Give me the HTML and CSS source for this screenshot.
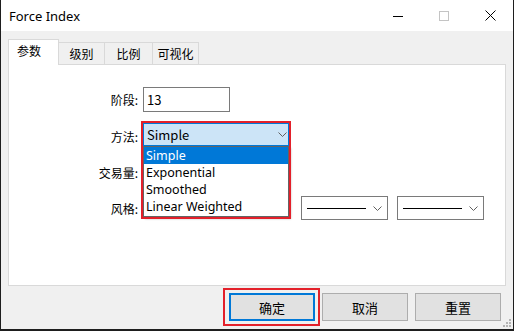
FILE: index.html
```html
<!DOCTYPE html>
<html lang="zh">
<head>
  <meta charset="UTF-8" />
  <title>Force Index</title>
  <link rel="stylesheet" href="styles.css">
</head>
<body>

  <div class="window">
    <!-- TITULO -->
    <div class="titlebar">
      <span class="title">Force Index</span>
      <div class="caption">
        <span class="cap-btn">
          <svg width="10" height="10" viewBox="0 0 10 10"><path d="M0 5.5h10" stroke="#000" stroke-width="1"/></svg>
        </span>
        <span class="cap-btn">
          <svg width="10" height="10" viewBox="0 0 10 10"><rect x="0.5" y="0.5" width="9" height="9" fill="none" stroke="#c4c4c4"/></svg>
        </span>
        <span class="cap-btn">
          <svg width="11" height="11" viewBox="0 0 11 11"><path d="M0.5 0.5l10 10M10.5 0.5l-10 10" stroke="#000" stroke-width="1"/></svg>
        </span>
      </div>
    </div>

    <!-- PESTAÑAS -->
    <div class="tabs">
      <div class="tab active">参数</div>
      <div class="tab">级别</div>
      <div class="tab wide">比例</div>
      <div class="tab">可视化</div>
    </div>

    <div class="panel">
      <div class="form">
        <label>阶段:</label>
        <div class="field"><div class="input">13</div></div>

        <label>方法:</label>
        <div class="field">
          <div class="combo-open">
            <div class="combo focus">
              <span>Simple</span>
              <svg class="chev" width="9" height="5" viewBox="0 0 9 5"><path d="M0.5 0.5l4 4 4-4" fill="none" stroke="#606060"/></svg>
            </div>
            <div class="dropdown">
              <div class="item selected">Simple</div>
              <div class="item">Exponential</div>
              <div class="item">Smoothed</div>
              <div class="item">Linear Weighted</div>
            </div>
            <div class="mark"></div>
          </div>
        </div>

        <label>交易量:</label>
        <div class="field"></div>

        <label>风格:</label>
        <div class="field row">
          <div class="spacer"></div>
          <div class="combo line">
            <span class="stroke"></span>
            <svg class="chev" width="9" height="5" viewBox="0 0 9 5"><path d="M0.5 0.5l4 4 4-4" fill="none" stroke="#606060"/></svg>
          </div>
          <div class="combo line">
            <span class="stroke"></span>
            <svg class="chev" width="9" height="5" viewBox="0 0 9 5"><path d="M0.5 0.5l4 4 4-4" fill="none" stroke="#606060"/></svg>
          </div>
        </div>
      </div>
    </div>

    <!-- BOTONES -->
    <div class="footer">
      <div class="btn-wrap">
        <button class="default">确定</button>
        <div class="mark"></div>
      </div>
      <button>取消</button>
      <button>重置</button>
    </div>

    <svg class="grip" width="8" height="8" viewBox="0 0 8 8" fill="#b4b4b4">
      <rect x="6" y="0" width="2" height="2"/>
      <rect x="3" y="3" width="2" height="2"/><rect x="6" y="3" width="2" height="2"/>
      <rect x="0" y="6" width="2" height="2"/><rect x="3" y="6" width="2" height="2"/><rect x="6" y="6" width="2" height="2"/>
    </svg>
  </div>

</body>
</html>
```

FILE: styles.css
```css
body {
  margin: 0;
  background: #1e1e1e;
  font-family: 'Noto Sans CJK SC', 'Noto Sans', sans-serif;
  font-size: 12px;
  color: #000;
}
.window {
  position: relative;
  width: 512px;
  height: 329px;
  margin-left: 1px;
  background: #f0f0f0;
  display: flex;
  flex-direction: column;
}
.titlebar {
  height: 31px;
  background: #fff;
  display: flex;
  align-items: center;
  flex-shrink: 0;
}
.title {
  padding-left: 8px;
  font-family: 'Noto Sans', sans-serif;
  font-size: 13px;
  flex: 1;
}
.caption {
  display: flex;
  height: 31px;
}
.cap-btn {
  width: 46px;
  display: flex;
  align-items: center;
  justify-content: center;
}
.tabs {
  display: flex;
  align-items: flex-end;
  margin: 9px 0 0 7px;
  height: 24px;
  position: relative;
  z-index: 1;
}
.tab {
  width: 45px;
  height: 21px;
  border: 1px solid #d9d9d9;
  border-bottom: none;
  border-left: none;
  box-sizing: content-box;
  text-align: center;
  line-height: 21px;
  background: #f0f0f0;
}
.tab.wide {
  width: 47px;
}
.tab.active {
  width: 49px;
  height: 25px;
  line-height: 22px;
  border-left: 1px solid #d9d9d9;
  background: #fff;
  margin-bottom: -1px;
  text-align: left;
  text-indent: 8px;
}
.panel {
  position: relative;
  margin: 0 7px;
  height: 220px;
  border: 1px solid #d9d9d9;
  background: #fff;
}
.form {
  display: grid;
  grid-template-columns: 129px 1fr;
  grid-template-rows: 25px 26px 25px 25px;
  column-gap: 5px;
  row-gap: 11px;
  padding-top: 22px;
}
.form label {
  text-align: right;
  align-self: center;
}
.field {
  position: relative;
}
.field.row {
  display: flex;
  gap: 9px;
}
.spacer {
  width: 149px;
}
.input {
  box-sizing: border-box;
  width: 87px;
  height: 25px;
  border: 1px solid #7a7a7a;
  line-height: 23px;
  padding-left: 3px;
  font-size: 13px;
}
.combo-open {
  position: relative;
  width: 146px;
}
.combo {
  display: flex;
  align-items: center;
  justify-content: space-between;
  box-sizing: border-box;
  height: 23px;
  border: 1px solid #7a7a7a;
  padding: 0 1px 0 3px;
  font-size: 13px;
}
.combo.focus {
  background: #cce4f7;
  border-color: #0078d7;
}
.combo.line {
  width: 87px;
  height: 24px;
  padding: 0 5px;
}
.stroke {
  width: 59px;
  border-top: 1px solid #000;
}
.dropdown {
  position: absolute;
  top: 23px;
  left: 0;
  width: 146px;
  height: 71px;
  box-sizing: border-box;
  border: 1px solid #646464;
  background: #fff;
  box-shadow: 2px 2px 2px rgba(0, 0, 0, 0.25);
  z-index: 2;
}
.item {
  height: 17px;
  line-height: 17px;
  padding-left: 2px;
  font-family: 'Noto Sans', sans-serif;
  font-size: 12.5px;
  overflow: hidden;
}
.item.selected {
  background: #0078d7;
  color: #fff;
}
.mark {
  position: absolute;
  top: -2px;
  left: -2px;
  width: 146px;
  height: 94px;
  border: 2px solid #e3202a;
  z-index: 3;
}
.footer {
  display: flex;
  justify-content: flex-end;
  gap: 7px;
  padding: 7px 12px 0 0;
}
.btn-wrap {
  position: relative;
}
.btn-wrap .mark {
  top: -5px;
  left: -6px;
  width: 93px;
  height: 34px;
}
button {
  width: 86px;
  height: 28px;
  border: 1px solid #adadad;
  background: #e1e1e1;
  font-family: 'Noto Sans CJK SC', sans-serif;
  font-size: 13px;
  padding: 0;
}
button.default {
  border: 2px solid #0078d7;
}
.grip {
  position: absolute;
  right: 2px;
  bottom: 2px;
}
```
